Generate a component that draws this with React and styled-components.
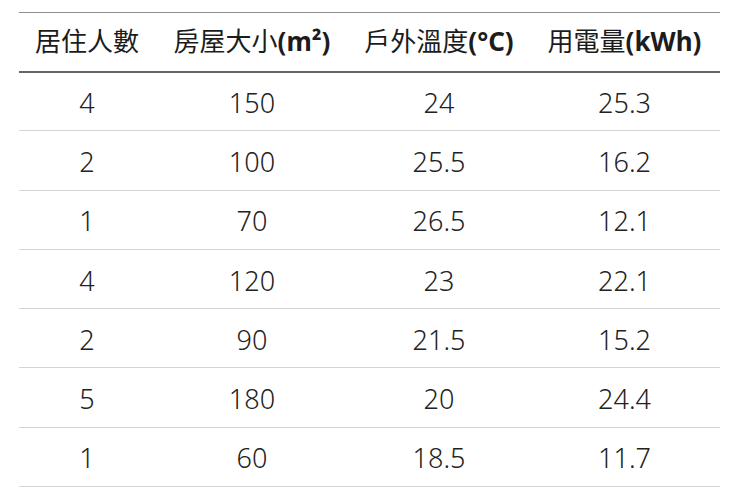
import React from 'react'
import styled, { createGlobalStyle } from 'styled-components'

const GlobalStyle = createGlobalStyle`
  body {
    margin: 0;
    background: #fff;
  }
`

const Sheet = styled.div`
  padding: 12px 20px 0 19px;
`

const Table = styled.table`
  width: 701px;
  table-layout: fixed;
  border-collapse: collapse;
  color: #1c1c1c;
  font-family: 'Noto Sans', 'Noto Sans CJK TC', sans-serif;
`

const Col = styled.col`
  width: ${(p) => p.$w}px;
`

const HeadRow = styled.tr`
  height: 59px;
`

const HeadCell = styled.th`
  padding: 0;
  font-size: 26px;
  font-weight: 400;
  line-height: 1.3;
  text-align: center;
  white-space: nowrap;
  border-top: 1px solid #8e8e8e;
  border-bottom: 2px solid #666;
`

const Unit = styled.span`
  font-weight: 700;
`

const Row = styled.tr`
  height: 59.3px;
`

const Cell = styled.td`
  padding: 2px 0 0;
  text-align: center;
  font-size: 27px;
  font-weight: 300;
  color: #222;
  border-bottom: 1px solid #d4d4d4;
`

const widths = [136, 194, 180, 191]

const rows = [
  ['4', '150', '24', '25.3'],
  ['2', '100', '25.5', '16.2'],
  ['1', '70', '26.5', '12.1'],
  ['4', '120', '23', '22.1'],
  ['2', '90', '21.5', '15.2'],
  ['5', '180', '20', '24.4'],
  ['1', '60', '18.5', '11.7'],
]

export default function App() {
  return (
    <>
      <GlobalStyle />
      <Sheet>
        <Table>
          <colgroup>
            {widths.map((w, i) => (
              <Col key={i} $w={w} />
            ))}
          </colgroup>
          <thead>
            <HeadRow>
              <HeadCell>居住人數</HeadCell>
              <HeadCell>
                房屋大小<Unit>(m²)</Unit>
              </HeadCell>
              <HeadCell>
                戶外溫度<Unit>(°C)</Unit>
              </HeadCell>
              <HeadCell>
                用電量<Unit>(kWh)</Unit>
              </HeadCell>
            </HeadRow>
          </thead>
          <tbody>
            {rows.map((r, i) => (
              <Row key={i}>
                {r.map((v, j) => (
                  <Cell key={j}>{v}</Cell>
                ))}
              </Row>
            ))}
          </tbody>
        </Table>
      </Sheet>
    </>
  )
}
